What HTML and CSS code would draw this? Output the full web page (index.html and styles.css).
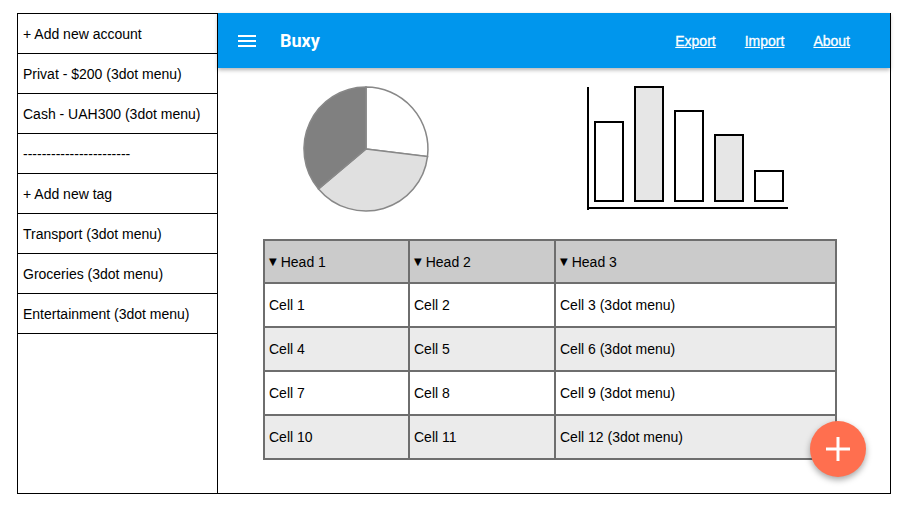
FILE: index.html
```html
<!DOCTYPE html>
<html>
<head>
<meta charset="utf-8">
<title>Buxy</title>
<link rel="stylesheet" href="styles.css">
</head>
<body>
<div class="frame">
  <aside class="sidebar">
    <div class="item">+ Add new account</div>
    <div class="item">Privat - $200 (3dot menu)</div>
    <div class="item">Cash - UAH300 (3dot menu)</div>
    <div class="item">-----------------------</div>
    <div class="item">+ Add new tag</div>
    <div class="item">Transport (3dot menu)</div>
    <div class="item">Groceries (3dot menu)</div>
    <div class="item">Entertainment (3dot menu)</div>
  </aside>
  <main class="main">
    <header class="appbar">
      <svg class="burger" width="18" height="12" viewBox="0 0 18 12">
        <rect x="0" y="0" width="18" height="2" fill="#fff"/>
        <rect x="0" y="5" width="18" height="2" fill="#fff"/>
        <rect x="0" y="10" width="18" height="2" fill="#fff"/>
      </svg>
      <span class="brand">Buxy</span>
      <nav class="nav">
        <a href="#">Export</a>
        <a href="#">Import</a>
        <a href="#">About</a>
      </nav>
    </header>
    <section class="charts">
      <svg class="pie" width="132" height="132" viewBox="0 0 132 132">
        <path d="M66 66 L66 4 A62 62 0 0 1 127.5 73.6 Z" fill="#ffffff" stroke="#888" stroke-width="1.5"/>
        <path d="M66 66 L127.5 73.6 A62 62 0 0 1 18.5 105.9 Z" fill="#e0e0e0" stroke="#888" stroke-width="1.5"/>
        <path d="M66 66 L18.5 105.9 A62 62 0 0 1 66 4 Z" fill="#808080" stroke="#888" stroke-width="1.5"/>
      </svg>
      <svg class="bars" width="202" height="125" viewBox="0 0 202 125">
        <rect x="9" y="37" width="28" height="79" fill="#fff" stroke="#000" stroke-width="2"/>
        <rect x="49" y="2" width="28" height="114" fill="#e6e6e6" stroke="#000" stroke-width="2"/>
        <rect x="89" y="26" width="28" height="90" fill="#fff" stroke="#000" stroke-width="2"/>
        <rect x="129" y="50" width="28" height="66" fill="#e6e6e6" stroke="#000" stroke-width="2"/>
        <rect x="169" y="86" width="28" height="30" fill="#fff" stroke="#000" stroke-width="2"/>
        <rect x="1" y="2" width="2" height="123" fill="#000"/>
        <rect x="1" y="122" width="201" height="2" fill="#000"/>
      </svg>
    </section>
    <div class="grid">
      <div class="cell head"><span class="tri">▼</span>Head 1</div>
      <div class="cell head"><span class="tri">▼</span>Head 2</div>
      <div class="cell head"><span class="tri">▼</span>Head 3</div>
      <div class="cell">Cell 1</div>
      <div class="cell">Cell 2</div>
      <div class="cell">Cell 3 (3dot menu)</div>
      <div class="cell alt">Cell 4</div>
      <div class="cell alt">Cell 5</div>
      <div class="cell alt">Cell 6 (3dot menu)</div>
      <div class="cell">Cell 7</div>
      <div class="cell">Cell 8</div>
      <div class="cell">Cell 9 (3dot menu)</div>
      <div class="cell alt">Cell 10</div>
      <div class="cell alt">Cell 11</div>
      <div class="cell alt">Cell 12 (3dot menu)</div>
    </div>
    <button class="fab" type="button" aria-label="Add">
      <svg width="24" height="24" viewBox="0 0 24 24">
        <rect x="10.5" y="0" width="3" height="24" fill="#fff"/>
        <rect x="0" y="10.5" width="24" height="3" fill="#fff"/>
      </svg>
    </button>
  </main>
</div>
</body>
</html>
```
FILE: styles.css
```css
html, body {
  margin: 0;
  padding: 0;
  background: #fff;
}

body {
  font-family: "Liberation Sans", Arial, sans-serif;
  color: #000;
}

.frame {
  margin: 13px 0 0 17px;
  width: 874px;
  height: 481px;
  box-sizing: border-box;
  border: 1px solid #000;
  display: flex;
}

.sidebar {
  width: 200px;
  flex-shrink: 0;
  box-sizing: border-box;
  border-right: 1px solid #000;
}

.item {
  height: 40px;
  box-sizing: border-box;
  border-bottom: 1px solid #000;
  display: flex;
  align-items: center;
  padding-left: 5px;
  font-size: 14px;
  white-space: nowrap;
}

.main {
  flex: 1;
  position: relative;
  display: flex;
  flex-direction: column;
  align-items: flex-start;
}

.appbar {
  align-self: stretch;
  height: 55px;
  margin-top: -1px;
  background: #0096ed;
  display: flex;
  align-items: center;
  box-shadow: 0 2px 4px rgba(0, 0, 0, 0.3);
  position: relative;
  z-index: 1;
}

.burger {
  margin-left: 20px;
  margin-top: 1px;
}

.brand {
  margin-left: 24px;
  font-family: Roboto, "Liberation Sans", sans-serif;
  font-weight: 700;
  font-size: 18px;
  color: #fff;
}

.nav {
  margin-left: auto;
  padding-right: 40px;
  display: flex;
  gap: 29px;
}

.nav a {
  color: #fff;
  font-size: 14px;
  text-decoration: underline;
  -webkit-text-stroke: 0.3px #fff;
}

.charts {
  display: flex;
  align-items: flex-start;
  padding-left: 82px;
  gap: 154px;
}

.pie {
  display: block;
  margin-top: 15px;
}

.bars {
  display: block;
  margin-top: 17px;
}

.grid {
  margin-left: 45px;
  margin-top: 24px;
  display: grid;
  grid-template-columns: 145px 146px 281px;
  grid-template-rows: 43px 44px 44px 44px 44px;
  border-top: 2px solid #6e6e6e;
  border-left: 2px solid #6e6e6e;
  width: 574px;
  box-sizing: border-box;
}

.cell {
  box-sizing: border-box;
  border-right: 2px solid #6e6e6e;
  border-bottom: 2px solid #6e6e6e;
  display: flex;
  align-items: center;
  padding-left: 4px;
  font-size: 14px;
  background: #fff;
  white-space: nowrap;
}

.tri {
  font-family: "DejaVu Sans", sans-serif;
  font-size: 10px;
  margin-right: 4px;
}

.head {
  background: #cbcbcb;
}

.alt {
  background: #ebebeb;
}

.fab {
  position: absolute;
  right: 24px;
  bottom: 16px;
  width: 56px;
  height: 56px;
  border: none;
  border-radius: 50%;
  background: #ff6f4f;
  box-shadow: 0 3px 6px rgba(0, 0, 0, 0.35);
  display: flex;
  align-items: center;
  justify-content: center;
  padding: 0;
}

.fab svg {
  display: block;
}
```
